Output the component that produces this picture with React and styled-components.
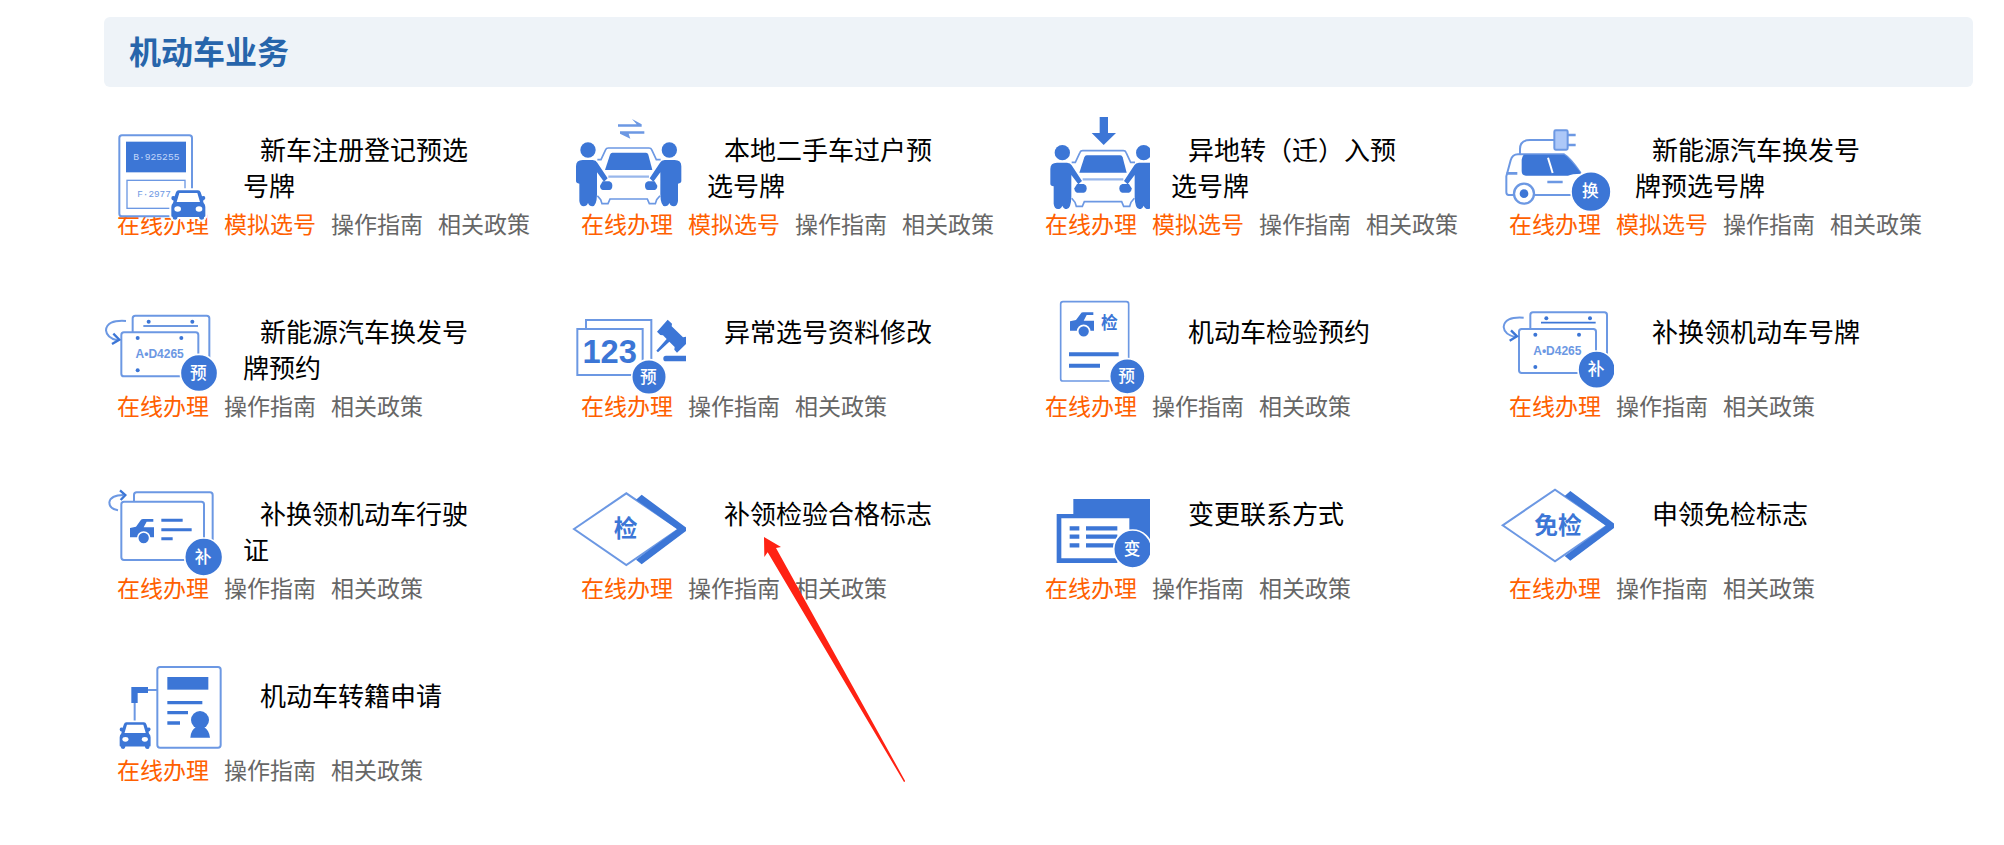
import React from 'react'
import styled, { createGlobalStyle } from 'styled-components'

const blue = '#3c76d6'
const lightBlue = '#6c98e3'
const cjk = '"Noto Sans CJK SC", sans-serif'

const GlobalStyle = createGlobalStyle`
    body {
        margin: 0;
        background: #fff;
        font-family: ${cjk};
    }
`;

const Page = styled.main`
    padding: 17px 31px 40px 104px;
`;

const SectionTitle = styled.h2`
    margin: 0;
    padding: 0 25px 4px;
    border-radius: 6px;
    background: #eef3f8;
    color: #2765ab;
    font-size: 32px;
    font-weight: 700;
    line-height: 66px;
`;

const ServiceGrid = styled.ul`
    display: grid;
    grid-template-columns: repeat(4, 1fr);
    row-gap: 55px;
    margin: 24px 13px 0 0;
    padding: 0;
    list-style: none;
`;

const Service = styled.li`
    position: relative;
`;

const ServiceTop = styled.div`
    display: flex;
    gap: 21px;
    height: 97px;
`;

const IconSvg = styled.svg`
    position: relative;
    z-index: 1;
    flex: none;
    width: 118px;
    height: 112px;
    pointer-events: none;
`;

const ServiceName = styled.h3`
    width: 232px;
    margin: 0;
    padding-top: 20px;
    color: #000;
    font-size: 26px;
    font-weight: 400;
    line-height: 36px;
    text-indent: 17px;
`;

const Links = styled.nav`
    display: flex;
    gap: 15px;
    padding-left: 13px;
`;

const ServiceLink = styled.a`
    color: ${props => props.$main ? '#ff6000' : '#666'};
    font-size: 23px;
    line-height: 30px;
    text-decoration: none;
    white-space: nowrap;

    &:hover{
        text-decoration: underline;
    }
`;

const ArrowSvg = styled.svg`
    position: absolute;
    z-index: 2;
    left: 196px;
    top: 62px;
    width: 141px;
    height: 245px;
    pointer-events: none;
`;

/* icons are drawn at three units to the pixel */
const Icon = ({ x, y, children }) => (
    <IconSvg viewBox={`${x} ${y} 354 336`} fill={blue} aria-hidden="true">{children}</IconSvg>
)

const Badge = ({ x, y, r, char }) => (
    <g>
        <circle cx={x} cy={y} r={r + 3} stroke="#fff" strokeWidth="5" />
        <text x={x - 2} y={y + 17} fill="#fff" fontFamily={cjk} fontWeight="500" fontSize="50" textAnchor="middle">{char}</text>
    </g>
)

const FrontCar = ({ transform }) => (
    <g transform={transform}>
        <path stroke="#fff" strokeWidth="12" paintOrder="stroke" d="M22 0H80Q86 0 88 6L92 18Q102 14 102 24Q100 30 95 31L97 38Q102 42 102 50V76Q102 80 98 80V84Q98 88 90 88Q84 88 83 80H19Q18 88 12 88Q4 88 4 82V80Q0 80 0 76V50Q0 42 5 38L7 31Q0 30 0 24Q0 14 10 18L14 6Q16 0 22 0Z" />
        <path fill="#fff" d="M24 8H78L86 35H16Z" />
        <ellipse cx="19" cy="56" rx="10" ry="8" fill="#fff" />
        <ellipse cx="83" cy="56" rx="10" ry="8" fill="#fff" />
    </g>
)

const SideCar = ({ transform }) => (
    <g transform={transform}>
        <path d="M120 97L138 93L152 74Q154 70 160 70H190V78H170L161 95H192V125H120Z" />
        <circle cx="161" cy="127" r="18" stroke="#fff" strokeWidth="5" />
    </g>
)

const Person = ({ transform }) => (
    <g transform={transform}>
        <circle cx="84" cy="153" r="23" />
        <path d="M48 202Q48 183 68 183H98Q108 184 112 191L143 238L132 248L111 220V286Q110 322 97 322Q88 322 84 312Q80 322 71 322Q60 322 58 306V254Q48 252 48 246Z" />
        <path d="M128 247H148Q157 250 157 260Q157 272 148 273H128Q120 270 120 260Z" />
    </g>
)

const CarAndPeople = ({ transform }) => (
    <g transform={transform}>
        <g fill="none" stroke={lightBlue} strokeWidth="5">
            <path d="M112 182H123L137 152Q139 147 145 147H267Q273 147 275 152L289 182H302" />
            <path d="M145 233H267" strokeWidth="7" opacity=".7" />
            <path d="M112 290L122 302L126 314H144L150 300H262L268 314H286L290 302L300 290" />
        </g>
        <path d="M157 161H258Q263 161 265 167L277 213H135L150 167Q152 161 157 161Z" />
        <Person />
        <Person transform="translate(412 0) scale(-1 1)" />
    </g>
)

const NewCarIcon = () => (
    <Icon x={42} y={336}>
        <rect x="88" y="409" width="218" height="243" rx="8" fill="#fff" stroke={lightBlue} strokeWidth="6" />
        <rect x="108" y="428" width="180" height="92" />
        <text x="199" y="483" fill="#c3d7fa" fontFamily="Liberation Mono" fontSize="29" textAnchor="middle">B·925255</text>
        <rect x="111" y="544" width="174" height="84" fill="none" stroke={lightBlue} strokeWidth="4" />
        <text x="192" y="594" fill={lightBlue} fontFamily="Liberation Mono" fontSize="28" textAnchor="middle">F·2977</text>
        <FrontCar transform="translate(244 574)" />
    </Icon>
)

const TransferIcon = () => (
    <Icon x={24} y={36}>
        <path fill={lightBlue} d="M174 76H230L216 60L245 76V83H174ZM253 97V104H206L211 119L180 104V97Z" />
        <CarAndPeople />
    </Icon>
)

const MoveInIcon = () => (
    <Icon x={6} y={36}>
        <path d="M209 54H234V102H258L221 138L185 102H209Z" />
        <CarAndPeople transform="translate(13 8)" />
    </Icon>
)

const ElectricCarIcon = () => (
    <Icon x={18} y={36}>
        <g fill="none" stroke={lightBlue} strokeWidth="6">
            <path d="M90 165V150Q90 123 120 123H192" />
            <path d="M245 288H135M70 288H56Q49 288 49 280V232L62 184Q67 166 84 166H222Q240 176 272 222" />
            <path d="M50 223H82M172 249H218M234 108H257M234 138H257" strokeWidth="8" />
        </g>
        <rect x="193" y="94" width="40" height="58" rx="4" fill="#adc8f8" stroke={lightBlue} strokeWidth="6" />
        <path d="M102 167H222Q234 172 274 224Q245 224 234 230H108Q95 230 95 216V182Q98 168 102 167Z" />
        <path d="M174 176L188 222" stroke="#fff" strokeWidth="6" />
        <circle cx="102" cy="284" r="30" fill="#fff" stroke={lightBlue} strokeWidth="7" />
        <circle cx="102" cy="284" r="13" />
        <Badge x={303} y={278} r={57} char="换" />
    </Icon>
)

const PlateIcon = ({ x, y, char }) => (
    <Icon x={x} y={y}>
        <g fill="#fff" stroke={lightBlue} strokeWidth="6">
            <rect x="128" y="80" width="230" height="140" rx="8" />
            <path d="M160 111H324" stroke={blue} strokeWidth="5" />
            <rect x="94" y="130" width="231" height="132" rx="8" />
            <path fill="none" d="M108 96Q50 92 48 124Q50 146 82 154" />
            <path fill="none" stroke={blue} strokeWidth="7" d="M70 134L88 152L66 165" />
        </g>
        <circle cx="176" cy="98" r="6" />
        <circle cx="307" cy="98" r="6" />
        <circle cx="143" cy="147" r="6" />
        <circle cx="274" cy="147" r="6" />
        <circle cx="143" cy="244" r="6" />
        <text x="209" y="208" fill={lightBlue} fontFamily="Liberation Sans" fontWeight="700" fontSize="36" textAnchor="middle">A•D4265</text>
        <Badge x={327} y={252} r={53} char={char} />
    </Icon>
)

const NumberFixIcon = () => (
    <Icon x={24} y={12}>
        <g fill="#fff" stroke={lightBlue} strokeWidth="6">
            <rect x="78" y="93" width="196" height="140" />
            <rect x="52" y="120" width="196" height="138" />
        </g>
        <text x="149" y="221" fontFamily="Liberation Sans" fontWeight="700" fontSize="98" textAnchor="middle">123</text>
        <path d="M323 92L336 104L335 112L369 145L378 143L388 155L351 191L343 182L344 174L328 158L294 190L289 185L320 150L309 139L301 138L291 128Z" />
        <rect x="310" y="200" width="92" height="17" rx="8" />
        <Badge x={267} y={264} r={49} char="预" />
    </Icon>
)

const InspectIcon = () => (
    <Icon x={6} y={12}>
        <rect x="92" y="38" width="204" height="238" rx="7" fill="#fff" stroke={lightBlue} strokeWidth="5" />
        <SideCar />
        <text x="238" y="119" fontFamily={cjk} fontWeight="700" fontSize="50" textAnchor="middle">检</text>
        <path d="M117 196H266M117 230H210" stroke={blue} strokeWidth="12" />
        <Badge x={292} y={262} r={50} char="预" />
    </Icon>
)

const LicenseIcon = () => (
    <Icon x={42} y={18}>
        <g fill="#fff" stroke={lightBlue} strokeWidth="6">
            <rect x="132" y="70" width="236" height="160" rx="8" />
            <rect x="94" y="98" width="248" height="175" rx="8" />
            <path fill="none" d="M84 124Q58 120 58 100Q62 78 100 78" />
            <path fill="none" stroke={blue} strokeWidth="7" d="M90 64L106 78L92 93" />
        </g>
        <SideCar transform="translate(0 80)" />
        <path d="M214 154H278M214 182H305M214 209H248" stroke={blue} strokeWidth="9" />
        <Badge x={341} y={264} r={54} char="补" />
    </Icon>
)

const DiamondIcon = ({ x, y, labelX, label }) => (
    <Icon x={x} y={y}>
        <path fill="#fff" stroke={lightBlue} strokeWidth="6" d="M42 180L199 73L356 180L199 288Z" />
        <path d="M228 92L245 77L385 181L245 286L228 272L352 181Z" />
        <text x={labelX} y="205" fontFamily={cjk} fontWeight="700" fontSize="71" textAnchor="middle">{label}</text>
    </Icon>
)

const ContactIcon = () => (
    <Icon x={6} y={18}>
        <path d="M130 90H362V282H80V135H130Z" />
        <path fill="#fff" d="M94 148H298V268H94Z" />
        <path fill="#fff" d="M262 268H300V220H362V300H262Z" />
        <path d="M119 178H148M168 178H262M119 203H148M168 203H262M119 229H148M168 229H262" stroke={blue} strokeWidth="13" />
        <Badge x={308} y={240} r={54} char="变" />
    </Icon>
)

const RelocateIcon = () => (
    <Icon x={42} y={24}>
        <path fill="none" stroke={lightBlue} strokeWidth="6" d="M202 123H170M134 160V222" />
        <rect x="202" y="54" width="190" height="242" rx="8" fill="#fff" stroke={lightBlue} strokeWidth="6" />
        <path d="M124 114H174V132H143V162H124Z" />
        <rect x="232" y="84" width="123" height="38" />
        <path d="M232 161H337M232 191H294M232 222H270" stroke={blue} strokeWidth="10" />
        <circle cx="330" cy="213" r="27" />
        <path d="M301 266Q302 244 318 234H342Q358 244 360 266Z" />
        <FrontCar transform="translate(89 220) scale(.91)" />
    </Icon>
)

const RedArrow = () => (
    <ArrowSvg viewBox="612 203 423 735" aria-hidden="true">
        <path fill="#ff2213" d="M612 203L663 233L648 236L1036 936L1032 938L623 249L613 263Z" />
    </ArrowSvg>
)

const services = [
    { name: '新车注册登记预选号牌', icon: <NewCarIcon />, trial: true },
    { name: '本地二手车过户预选号牌', icon: <TransferIcon />, trial: true },
    { name: '异地转（迁）入预选号牌', icon: <MoveInIcon />, trial: true },
    { name: '新能源汽车换发号牌预选号牌', icon: <ElectricCarIcon />, trial: true },
    { name: '新能源汽车换发号牌预约', icon: <PlateIcon x={42} y={12} char="预" /> },
    { name: '异常选号资料修改', icon: <NumberFixIcon /> },
    { name: '机动车检验预约', icon: <InspectIcon /> },
    { name: '补换领机动车号牌', icon: <PlateIcon x={25} y={22} char="补" /> },
    { name: '补换领机动车行驶证', icon: <LicenseIcon /> },
    { name: '补领检验合格标志', icon: <DiamondIcon x={24} y={18} labelX={197} label="检" />, marked: true },
    { name: '变更联系方式', icon: <ContactIcon /> },
    { name: '申领免检标志', icon: <DiamondIcon x={22} y={29} labelX={208} label="免检" /> },
    { name: '机动车转籍申请', icon: <RelocateIcon /> },
]

const App = () => {
    return(
        <Page>
            <GlobalStyle />
            <SectionTitle>机动车业务</SectionTitle>
            <ServiceGrid>
                {services.map(({ name, icon, trial, marked }) => (
                    <Service key={name}>
                        <ServiceTop>
                            {icon}
                            <ServiceName>{name}</ServiceName>
                        </ServiceTop>
                        <Links aria-label={name}>
                            <ServiceLink href="#" $main>在线办理</ServiceLink>
                            {trial && <ServiceLink href="#" $main>模拟选号</ServiceLink>}
                            <ServiceLink href="#">操作指南</ServiceLink>
                            <ServiceLink href="#">相关政策</ServiceLink>
                        </Links>
                        {marked && <RedArrow />}
                    </Service>
                ))}
            </ServiceGrid>
        </Page>
    )
}

export default App
